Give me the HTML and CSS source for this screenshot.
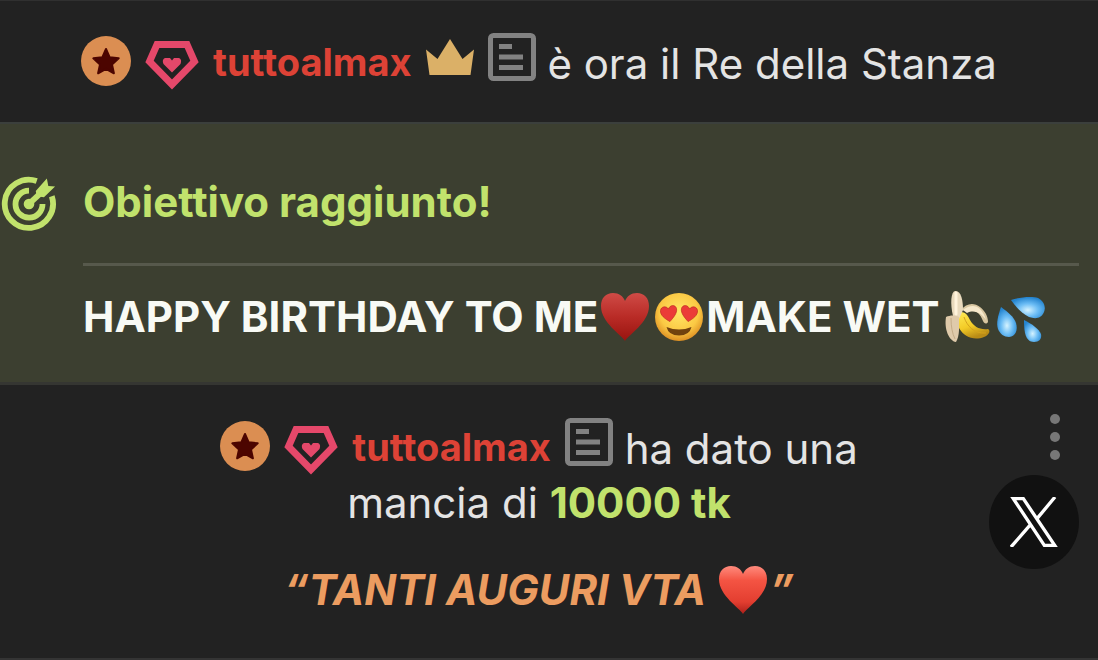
FILE: index.html
```html
<!DOCTYPE html>
<html lang="it">
  <head>
    <meta charset="UTF-8" />
    <meta name="viewport" content="width=device-width, initial-scale=1.0" />
    <title>Chat</title>
    <link rel="stylesheet" href="styles.css">
  </head>
  <body>
    <!-- shared icons -->
    <svg class="sprite" aria-hidden="true">
      <symbol id="badge" viewBox="1 -1 50 54">
        <circle cx="26" cy="25" r="25" fill="#db8e52" />
        <path d="M26 13l3.700 8.300 9 1-6.700 6.100 1.900 8.900-7.900-4.500-7.900 4.500 1.900-8.900-6.700-6.100 9-1z" fill="#4c0500" stroke="#4c0500" stroke-width="2" stroke-linejoin="round" />
      </symbol>
      <symbol id="gem" viewBox="0 -6 54 60">
        <path d="M12 6.500H42L49.500 23.500 27 46.500 4.500 23.500z" fill="none" stroke="#e5486a" stroke-width="7" />
        <path d="M27 34.500l-8.500-8.500c-2-5 1-6.500 3.500-6h3l2 2.500 2-2.500h3c2.500-.5 5.500 1 3.500 6z" fill="#e5486a" />
      </symbol>
      <symbol id="note" viewBox="0 0 48 58">
        <rect x="2.500" y="2.500" width="43" height="43" rx="3" fill="none" stroke="#828282" stroke-width="5" />
        <path d="M11 13.500h13M11 24h24M11 34.500h24" stroke="#828282" stroke-width="5" />
      </symbol>
      <symbol id="heart" viewBox="0 0 50 50">
        <path d="M25 49C22 43 1 31 1 14 1 6 6 1 13 1c6 0 10 3 12 8 2-5 6-8 12-8 7 0 12 5 12 13 0 17-21 29-24 35z" />
      </symbol>
    </svg>

    <div class="chat">
      <div class="message message-notice">
        <span class="user">
          <svg class="icon-badge"><use href="#badge" /></svg>
          <svg class="icon-gem"><use href="#gem" /></svg>
          <a class="username" href="#">tuttoalmax</a>
          <svg class="icon-crown" viewBox="0 0 48 58">
            <path d="M0 16.500L11.500 26 24 6 36.500 26 48 16.500 44.500 42H3.500z" fill="#dbb067" />
          </svg>
          <svg class="icon-note"><use href="#note" /></svg>
        </span>
        è ora il Re della Stanza
      </div>

      <div class="goal">
        <svg class="icon-goal" viewBox="-1 -2 58 58">
          <g fill="none" stroke="#c1e26c" stroke-width="6">
            <path d="M36 4.200A25 25 0 1 0 51.600 20" />
            <path d="M28 14.200A14 14 0 1 0 42 28" />
            <path d="M28 28L42 15" stroke-width="6" />
          </g>
          <circle cx="28" cy="28" r="5.500" fill="#c1e26c" />
          <path d="M35 14.500L46.500 1.500 48 9.500 55 10 43.500 21 36 20z" fill="#c1e26c" />
        </svg>
        <div class="goal-body">
          <div class="goal-title">Obiettivo raggiunto!</div>
          <div class="goal-text">HAPPY BIRTHDAY TO ME<svg class="emoji heart-dark" role="img" aria-label="cuore"><use href="#heart" /></svg><svg class="emoji" viewBox="0 0 50 50" role="img" aria-label="occhi a cuore">
              <defs>
                <radialGradient id="face" cx=".5" cy=".4" r=".62">
                  <stop offset="0" stop-color="#ffe767" />
                  <stop offset=".65" stop-color="#fbc944" />
                  <stop offset="1" stop-color="#db8a20" />
                </radialGradient>
              </defs>
              <circle cx="25" cy="25" r="24" fill="url(#face)" />
              <path d="M12.500 35q12.500 5 25 0-2 8.500-12.500 8.500T12.500 35z" fill="#71420e" />
              <path id="eye" d="M16 29.500C11 27 6 23 6.500 18.500c.5-4 5.500-5 8-1.500 1.500-4.500 7-4.500 8-.5 1 4.500-3.500 9.500-6.500 13z" fill="#eb3b38" stroke="#bd2c20" stroke-width=".7" />
              <use href="#eye" transform="matrix(-1 0 0 1 50 0)" />
            </svg>MAKE WET<svg class="emoji" viewBox="0 0 50 54" role="img" aria-label="banana">
              <defs>
                <linearGradient id="banana" x1="0" y1="0" x2=".4" y2="1">
                  <stop offset="0" stop-color="#ffeb58" />
                  <stop offset=".6" stop-color="#f3cb26" />
                  <stop offset="1" stop-color="#b98b16" />
                </linearGradient>
              </defs>
              <path d="M19 20c5-7 13-8 19-3 5 4 8 9 8 15-2 3-4 1-5-1-3-8-8-12-15-10z" fill="#d8c6a0" />
              <path d="M21 20c6-5 13-5 17-1 3 3 5 7 6 11-4-6-11-11-19-7z" fill="#f6e8cb" />
              <path d="M19 22c5 0 7 4 9 8 4 7 10 10 18 9 3 2 1 6-4 8-10 4-20 0-25-9-3-6-3-12 2-16z" fill="url(#banana)" />
              <path d="M22 27c3 9 10 17 22 16" fill="none" stroke="#d5a31c" stroke-width="1" />
              <path d="M11 26C8 13 9 2 13 1c6-1 8 9 8 19l-4 9z" fill="#e9dabd" />
              <path d="M14 3v21" stroke="#fff3dc" stroke-width="3" stroke-linecap="round" />
              <path d="M4 27c4-2 10-2 13 0 0 9 1 19-3 25-7-1-12-13-10-25z" fill="#dfcaaa" />
              <path d="M9 28q0 13 4 21" fill="none" stroke="#c4ab87" stroke-width="1" />
            </svg><svg class="emoji" viewBox="0 0 50 50" role="img" aria-label="gocce">
              <defs>
                <radialGradient id="drop" cx=".5" cy=".62" r=".6">
                  <stop offset="0" stop-color="#d5f3ff" />
                  <stop offset=".5" stop-color="#6cbdf5" />
                  <stop offset="1" stop-color="#2585d0" />
                </radialGradient>
              </defs>
              <g fill="url(#drop)">
                <path d="M5 15C2 24 0 31 2 37c2 5 6 8 11 8 7-1 9-7 7-14C18 25 12 20 5 15z" />
                <path d="M15 8C24 5 36 4 42 6c6 3 8 9 6 14-3 7-9 7-15 5C25 21 20 15 15 8z" />
                <path d="M28 28c8 4 15 9 17 14 1 5-2 8-7 8-9 0-10-11-10-22z" />
              </g>
            </svg></div>
        </div>
      </div>

      <div class="message message-tip">
        <span class="user">
          <svg class="icon-badge"><use href="#badge" /></svg>
          <svg class="icon-gem"><use href="#gem" /></svg>
          <a class="username" href="#">tuttoalmax</a>
          <svg class="icon-note"><use href="#note" /></svg>
        </span>
        ha dato una mancia di <b class="amount">10000 tk</b>
        <div class="tip-note">“TANTI AUGURI VTA <svg class="emoji heart-light" role="img" aria-label="cuore"><use href="#heart" /></svg>”</div>
        <div class="actions">
          <button class="menu-button" aria-label="Menu">
            <svg viewBox="0 0 10 48"><circle cx="5" cy="6" r="5" /><circle cx="5" cy="24" r="5" /><circle cx="5" cy="42" r="5" /></svg>
          </button>
          <a class="share" href="#" aria-label="X">
            <svg viewBox="0 0 144 150" fill="none" stroke="#fff" stroke-width="10">
              <path d="M10 5H40L134 145H103zM81 65L135 0M62 82L3 150" />
            </svg>
          </a>
        </div>
      </div>
    </div>

    <svg class="sprite" aria-hidden="true">
      <linearGradient id="red-dark" x1="0" y1="0" x2="0" y2="1">
        <stop offset="0" stop-color="#cf4b46" />
        <stop offset=".5" stop-color="#b92b26" />
        <stop offset="1" stop-color="#98140f" />
      </linearGradient>
      <linearGradient id="red-light" x1="0" y1="0" x2="0" y2="1">
        <stop offset="0" stop-color="#ff8b7d" />
        <stop offset=".3" stop-color="#f45443" />
        <stop offset=".75" stop-color="#e33e30" />
        <stop offset="1" stop-color="#ad201a" />
      </linearGradient>
    </svg>
  </body>
</html>
```
FILE: styles.css
```css
* {
  box-sizing: border-box;
}

body {
  margin: 0;
  background: #222222;
  color: #e4e4e4;
  font-family: Inter, "Liberation Sans", sans-serif;
  font-size: 42px;
  line-height: 54px;
}

a {
  text-decoration: none;
}

.sprite {
  position: absolute;
  width: 0;
  height: 0;
}

.chat {
  border-top: 1px solid #303030;
}

.message {
  position: relative;
  text-align: center;
}

.message-notice {
  padding: 36px 20px 31px 0;
}

.message-tip {
  padding: 37px 220px 41px 200px;
  border-bottom: 2px solid #343434;
}

.user {
  display: inline-flex;
  align-items: center;
  gap: 14px;
  height: 50px;
  vertical-align: top;
}

.username {
  color: #dd4236;
  font-size: 38px;
  font-weight: 700;
  line-height: 50px;
}

.icon-badge {
  width: 50px;
  height: 54px;
}

.icon-gem {
  width: 54px;
  height: 60px;
}

.icon-crown,
.icon-note {
  width: 48px;
  height: 58px;
}

/* goal reached */
.goal {
  display: flex;
  gap: 26px;
  padding: 51px 19px 38px 1px;
  background: #3c3f30;
  border-top: 2px solid #3b3f3c;
  border-bottom: 3px solid #353632;
}

.icon-goal {
  flex: none;
  width: 56px;
  height: 56px;
}

.goal-body {
  flex: 1;
  font-weight: 650;
}

.goal-title {
  padding-bottom: 34px;
  border-bottom: 3px solid #57594c;
  color: #c1e26c;
}

.goal-text {
  padding-top: 24px;
  color: #f8faf5;
  white-space: nowrap;
}

.emoji {
  width: 50px;
  height: 54px;
  margin: 0 2px;
  vertical-align: top;
}

.heart-dark {
  fill: url(#red-dark);
}

.heart-light {
  fill: url(#red-light);
}

/* tip */
.amount {
  color: #c1e26c;
  font-weight: 650;
}

.tip-note {
  margin-top: 33px;
  color: #ec9c60;
  font-style: italic;
  font-weight: 650;
}

/* floating buttons over the tip */
.actions {
  position: absolute;
  top: 28px;
  right: 19px;
  display: flex;
  flex-direction: column;
  align-items: center;
  gap: 14px;
}

.menu-button {
  width: 52px;
  height: 48px;
  padding: 0;
  border: 0;
  background: none;
  fill: #777777;
}

.menu-button svg {
  display: block;
  width: 10px;
  height: 48px;
  margin: 0 0 0 auto;
}

.share {
  display: flex;
  align-items: center;
  justify-content: center;
  width: 90px;
  height: 94px;
  border-radius: 50%;
  background: #111111;
}

.share svg {
  width: 48px;
  height: 50px;
}
```
